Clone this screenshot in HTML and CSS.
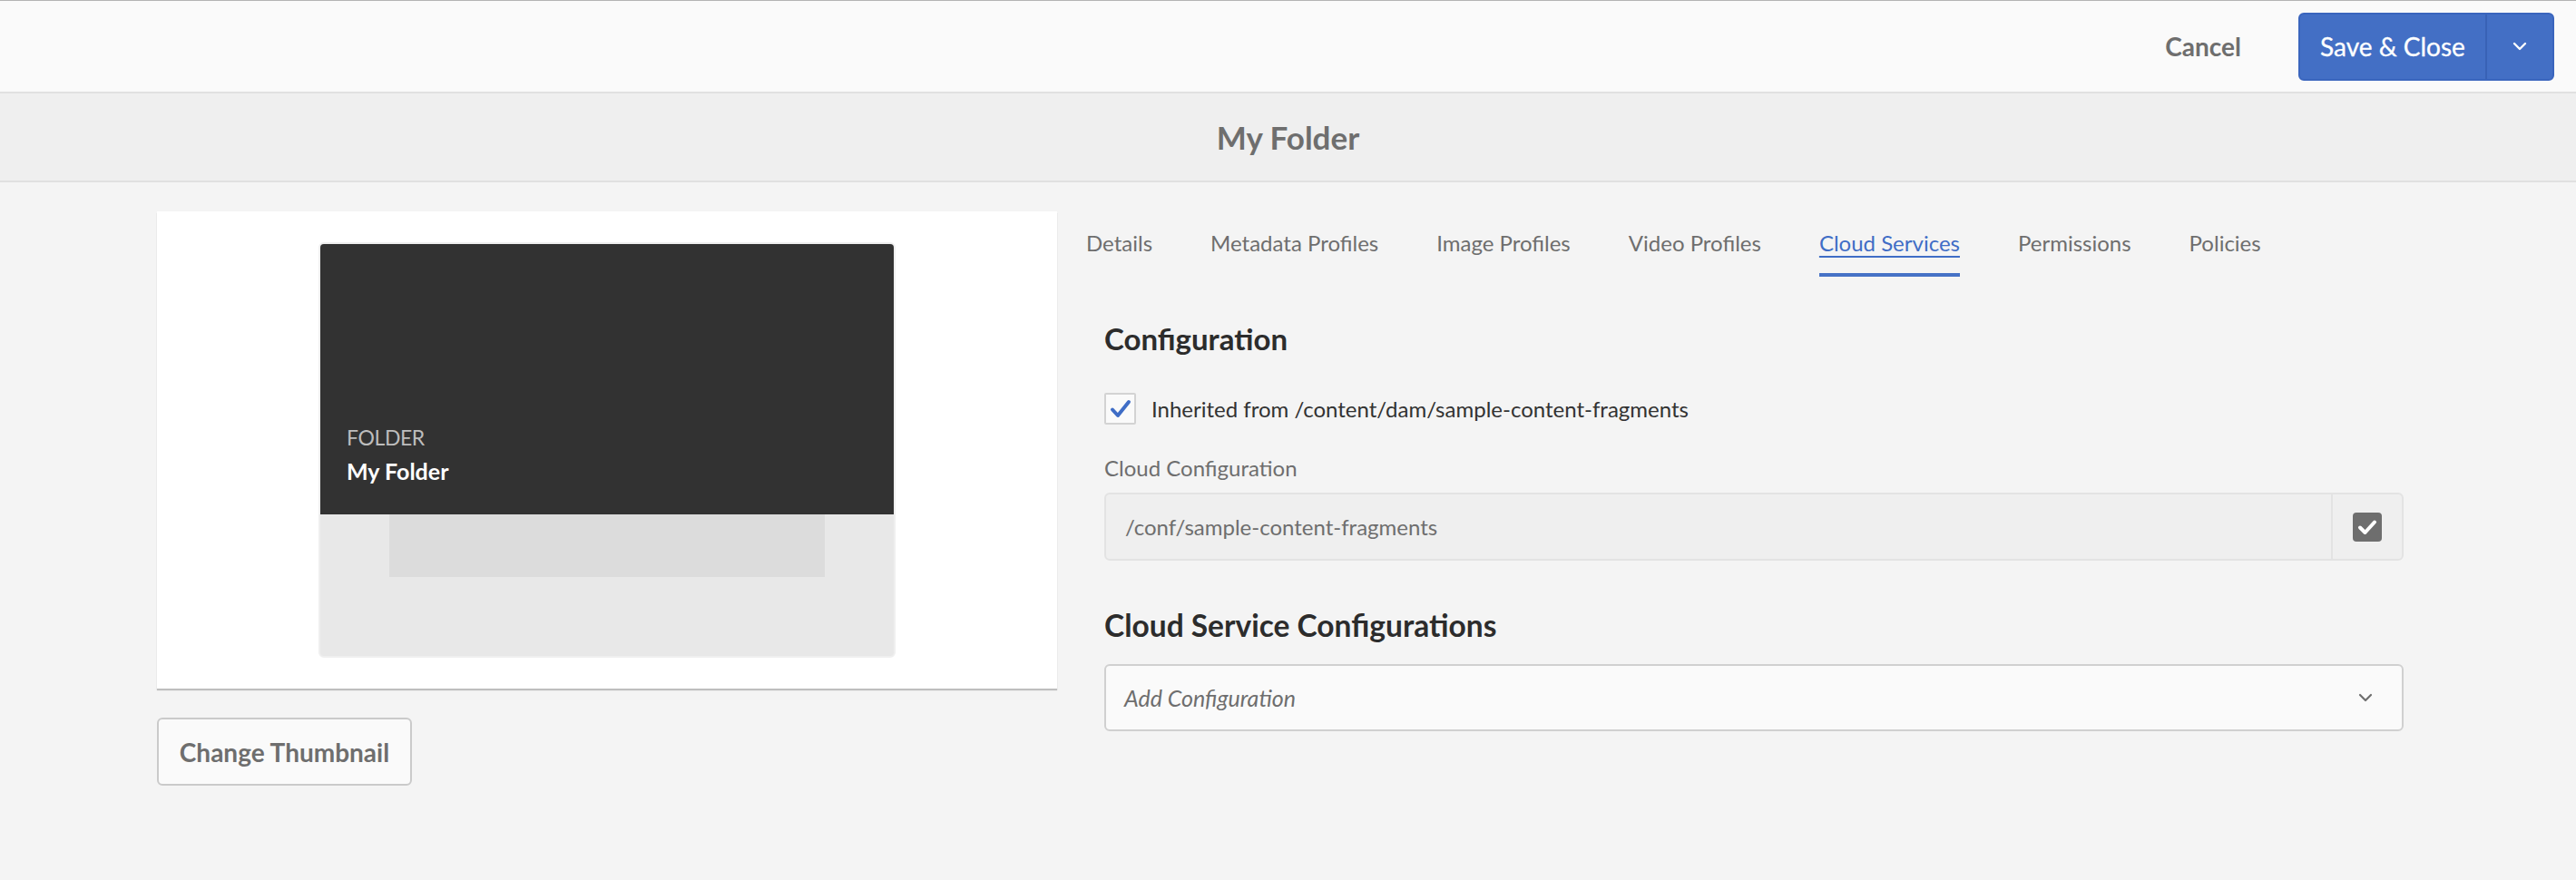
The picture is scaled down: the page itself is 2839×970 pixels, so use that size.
FILE: index.html
```html
<!DOCTYPE html>
<html lang="en">
<head>
<meta charset="utf-8">
<title>My Folder - Properties</title>
<link rel="stylesheet" href="styles.css">
</head>
<body>
<header class="topbar">
  <button class="btn-quiet">Cancel</button>
  <div class="split-btn">
    <button class="split-main">Save &amp; Close</button>
    <button class="split-toggle" aria-label="More">
      <svg width="16" height="10" viewBox="0 0 16 10"><path d="M2 2 L8 8 L14 2" fill="none" stroke="#ffffff" stroke-width="2.4" stroke-linecap="round" stroke-linejoin="round"/></svg>
    </button>
  </div>
</header>
<div class="titlebar"><h1 class="title">My Folder</h1></div>
<main class="main">
  <section class="left">
    <div class="preview">
      <div class="card">
        <div class="card-top">
          <div class="card-type">FOLDER</div>
          <div class="card-name">My Folder</div>
        </div>
        <div class="card-bottom"><div class="card-slot"></div></div>
      </div>
    </div>
    <button class="btn-secondary">Change Thumbnail</button>
  </section>
  <section class="right">
    <nav class="tabs">
      <a class="tab">Details</a>
      <a class="tab">Metadata Profiles</a>
      <a class="tab">Image Profiles</a>
      <a class="tab">Video Profiles</a>
      <a class="tab active">Cloud Services</a>
      <a class="tab">Permissions</a>
      <a class="tab">Policies</a>
    </nav>
    <div class="panel">
      <h2 class="heading">Configuration</h2>
      <label class="check-row">
        <span class="checkbox">
          <svg width="24" height="22" viewBox="0 0 24 22"><path d="M3 11.5 L9 18 L21 3" fill="none" stroke="#3f6dc6" stroke-width="4" stroke-linecap="round" stroke-linejoin="round"/></svg>
        </span>
        <span class="check-label">Inherited from /content/dam/sample-content-fragments</span>
      </label>
      <div class="field-label">Cloud Configuration</div>
      <div class="pathfield">
        <div class="path-value">/conf/sample-content-fragments</div>
        <div class="path-btn">
          <span class="path-icon">
            <svg width="22" height="18" viewBox="0 0 22 18"><path d="M3 9.5 L8.5 15 L19 3.5" fill="none" stroke="#ffffff" stroke-width="4" stroke-linecap="round" stroke-linejoin="round"/></svg>
          </span>
        </div>
      </div>
      <h2 class="heading heading-2">Cloud Service Configurations</h2>
      <div class="select">
        <span class="select-placeholder">Add Configuration</span>
        <svg width="16" height="10" viewBox="0 0 16 10"><path d="M2 2 L8 8 L14 2" fill="none" stroke="#6e6e6e" stroke-width="2.2" stroke-linecap="round" stroke-linejoin="round"/></svg>
      </div>
    </div>
  </section>
</main>
</body>
</html>
```

FILE: styles.css
```css
* { box-sizing: border-box; }

html, body {
  margin: 0;
  padding: 0;
}

body {
  background: #f4f4f4;
  font-family: Lato, "Noto Sans", sans-serif;
  color: #323232;
}

button {
  font-family: inherit;
  cursor: pointer;
}

/* top action bar */
.topbar {
  height: 103px;
  background: #fafafa;
  border-top: 1px solid #b3b3b3;
  border-bottom: 2px solid #e1e1e1;
  display: flex;
  align-items: center;
  justify-content: flex-end;
  padding-right: 24px;
}

.btn-quiet {
  background: transparent;
  border: 0;
  color: #6e6e6e;
  font-size: 28px;
  font-weight: 700;
  padding: 0 28px;
  margin-right: 35px;
  height: 75px;
}

.split-btn {
  display: flex;
  height: 75px;
  width: 282px;
  border: 2px solid #3a65bd;
  border-radius: 6px;
  background: #436fc5;
  overflow: hidden;
}

.split-main {
  flex: 1;
  background: transparent;
  border: 0;
  border-right: 2px solid #3862b6;
  color: #ffffff;
  font-size: 28px;
  font-weight: 400;
  padding: 0;
  -webkit-text-stroke: 0.3px #ffffff;
}

.split-toggle {
  width: 72px;
  background: transparent;
  border: 0;
  display: flex;
  align-items: center;
  justify-content: center;
  padding: 0;
}

/* title */
.titlebar {
  height: 98px;
  background: #efefef;
  border-bottom: 2px solid #e0e0e0;
  display: flex;
  align-items: center;
  justify-content: center;
}

.title {
  margin: 0;
  font-size: 35px;
  font-weight: 700;
  color: #6e6e6e;
}

/* main layout */
.main {
  display: flex;
  padding: 32px 0 0 173px;
}

.left {
  width: 992px;
  display: flex;
  flex-direction: column;
  align-items: flex-start;
}

.preview {
  width: 992px;
  height: 526px;
  background: #ffffff;
  box-shadow: 0 2px 1px rgba(0, 0, 0, 0.22);
  display: flex;
  justify-content: center;
  padding-top: 34px;
}

.card {
  width: 636px;
  height: 458px;
  border-radius: 6px;
  border: 2px solid #efefef;
  overflow: hidden;
  display: flex;
  flex-direction: column;
  background: #e8e8e8;
}

.card-top {
  height: 298px;
  background: #323232;
  display: flex;
  flex-direction: column;
  justify-content: flex-end;
  padding: 0 0 31px 29px;
}

.card-type {
  font-size: 23px;
  letter-spacing: -0.4px;
  color: #bdbdbd;
  line-height: 34px;
}

.card-name {
  font-size: 25px;
  font-weight: 700;
  color: #ffffff;
  line-height: 34px;
  margin-top: 3px;
}

.card-bottom {
  flex: 1;
  display: flex;
  justify-content: center;
}

.card-slot {
  width: 480px;
  height: 69px;
  background: #dcdcdc;
}

.btn-secondary {
  margin-top: 32px;
  width: 281px;
  height: 75px;
  background: #fafafa;
  border: 2px solid #cacaca;
  border-radius: 6px;
  color: #6e6e6e;
  font-size: 28px;
  font-weight: 700;
  padding: 0;
}

/* right column */
.right {
  margin-left: 32px;
  width: 1452px;
}

.tabs {
  display: flex;
  gap: 64px;
  height: 72px;
}

.tab {
  font-size: 24px;
  color: #6e6e6e;
  display: flex;
  align-items: center;
  border-bottom: 4px solid transparent;
}

.tab.active {
  color: #3f6dc6;
  border-bottom-color: #4672c6;
  text-decoration: underline;
  text-underline-offset: 5px;
  text-decoration-thickness: 2px;
}

.panel {
  padding-left: 20px;
}

.heading {
  margin: 48px 0 0;
  font-size: 33px;
  line-height: 40px;
  font-weight: 700;
  color: #2c2c2c;
}

.heading-2 {
  margin-top: 51px;
  font-size: 33.5px;
}

.check-row {
  margin-top: 40px;
  display: flex;
  align-items: center;
  height: 35px;
}

.checkbox {
  width: 35px;
  height: 35px;
  border: 2px solid #d3d3d3;
  background: #fafafa;
  border-radius: 2px;
  display: flex;
  align-items: center;
  justify-content: center;
}

.check-label {
  margin-left: 17px;
  font-size: 24px;
  color: #323232;
}

.field-label {
  margin-top: 31px;
  font-size: 24px;
  line-height: 34px;
  color: #6e6e6e;
}

.pathfield {
  margin-top: 10px;
  height: 75px;
  display: flex;
  background: #efefef;
  border: 2px solid #e3e3e3;
  border-radius: 6px;
}

.path-value {
  flex: 1;
  display: flex;
  align-items: center;
  padding-left: 21px;
  font-size: 24px;
  color: #6e6e6e;
}

.path-btn {
  width: 78px;
  border-left: 2px solid #e3e3e3;
  display: flex;
  align-items: center;
  justify-content: center;
}

.path-icon {
  width: 32px;
  height: 32px;
  border-radius: 4px;
  background: #6e6e6e;
  display: flex;
  align-items: center;
  justify-content: center;
}

.select {
  margin-top: 23px;
  height: 74px;
  background: #fafafa;
  border: 2px solid #d0d0d0;
  border-radius: 6px;
  display: flex;
  align-items: center;
  justify-content: space-between;
  padding: 0 32px 0 20px;
}

.select-placeholder {
  font-size: 25px;
  font-style: italic;
  color: #6e6e6e;
}
```
